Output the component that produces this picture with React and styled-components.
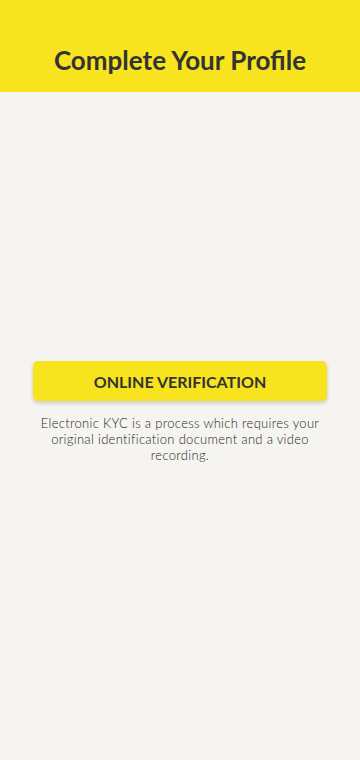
import React from "react";
import styled, { createGlobalStyle } from "styled-components";

const GlobalStyle = createGlobalStyle`
  html, body {
    margin: 0;
    padding: 0;
    background: #f5f4f1;
  }
  body {
    font-family: Lato, "Noto Sans", sans-serif;
    color: #333333;
  }
  * {
    box-sizing: border-box;
  }
`;

const Page = styled.div`
  display: flex;
  flex-direction: column;
  min-height: 760px;
  background: #f5f4f1;
`;

const Header = styled.header`
  height: 92px;
  background: #f7e31e;
  display: flex;
  align-items: flex-end;
  justify-content: center;
  padding-bottom: 16px;
`;

const Title = styled.h1`
  margin: 0;
  font-size: 26px;
  font-weight: 700;
  color: #333333;
`;

const Main = styled.main`
  flex: 1;
  display: flex;
  flex-direction: column;
  align-items: center;
  justify-content: center;
  padding: 0 33px 28px;
`;

const VerifyButton = styled.button`
  width: 100%;
  height: 40px;
  border: none;
  border-radius: 5px;
  background: #f7e31e;
  color: #333333;
  font-family: Lato, "Noto Sans", sans-serif;
  font-size: 16px;
  font-weight: 700;
  box-shadow: 0 2px 4px rgba(0, 0, 0, 0.18);
  cursor: pointer;
`;

const Description = styled.p`
  margin: 14px -8px 0;
  font-size: 13px;
  line-height: 16px;
  font-weight: 300;
  letter-spacing: 0.3px;
  text-align: center;
  color: #1f1f1f;
`;

export default function App() {
  return (
    <>
      <GlobalStyle />
      <Page>
        <Header>
          <Title>Complete Your Profile</Title>
        </Header>
        <Main>
          <VerifyButton>ONLINE VERIFICATION</VerifyButton>
          <Description>
            Electronic KYC is a process which requires your original
            identification document and a video recording.
          </Description>
        </Main>
      </Page>
    </>
  );
}
